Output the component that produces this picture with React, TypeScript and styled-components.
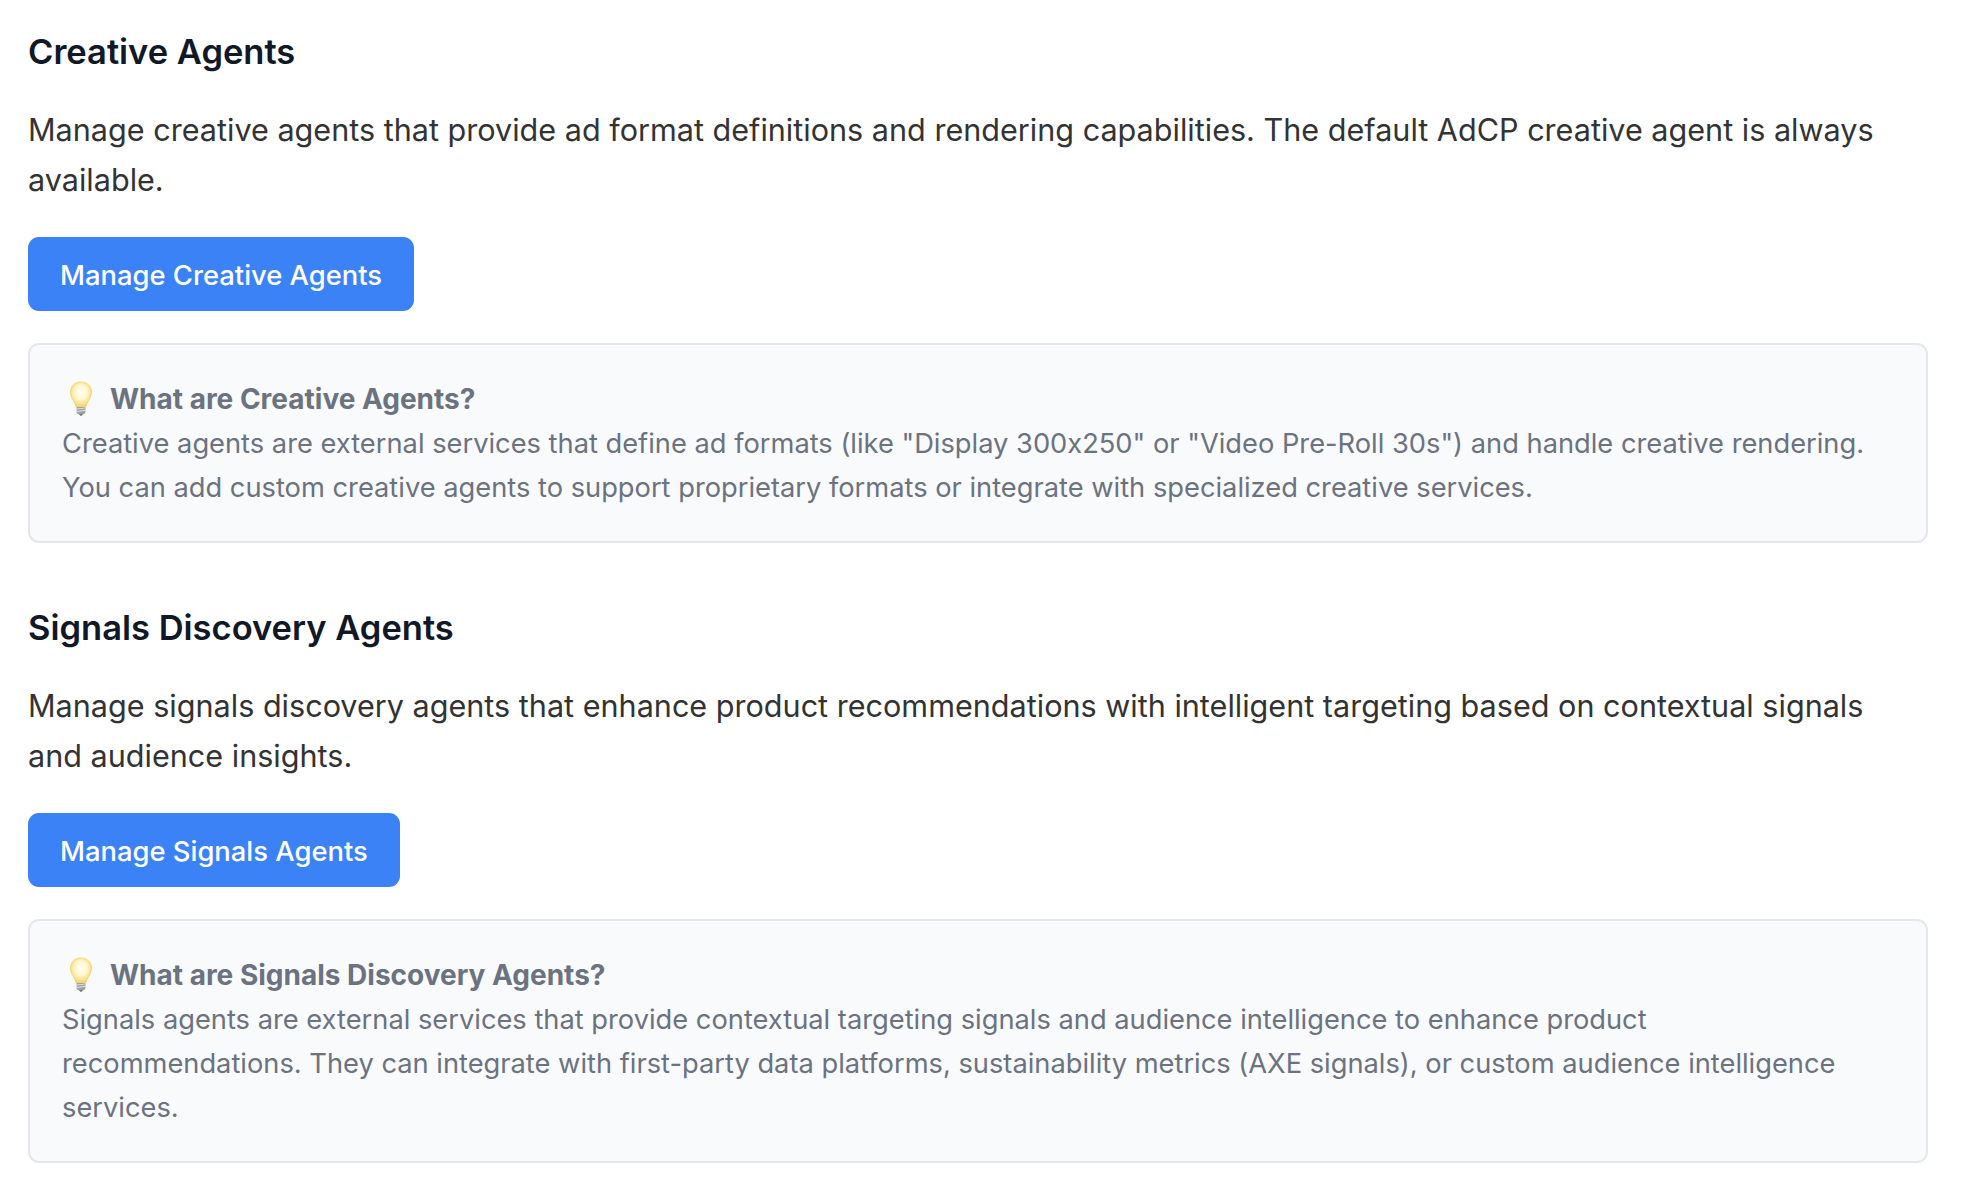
import React from "react";
import styled, { createGlobalStyle } from "styled-components";

const Global = createGlobalStyle`
  html, body { margin: 0; padding: 0; background: #fff; }
  body {
    font-family: Inter, "Liberation Sans", sans-serif;
    font-feature-settings: "calt" 0;
  }
`;

const Page = styled.main`
  width: 1900px;
  padding: 28px 48px 30px 28px;
`;

const Section = styled.section`
  margin-bottom: 61px;
  &:last-child { margin-bottom: 0; }
`;

const Heading = styled.h2`
  margin: 0;
  font-size: 34.5px;
  line-height: 48px;
  font-weight: 600;
  color: #111827;
`;

const Lead = styled.p`
  margin: 29px 0 0;
  max-width: 1885px;
  font-size: 30.58px;
  line-height: 50px;
  font-weight: 400;
  color: #333;
`;

const Button = styled.button`
  display: block;
  margin-top: 32px;
  height: 74px;
  padding: 1px 32px 0;
  border: 0;
  border-radius: 11px;
  background: #3b82f6;
  color: #fff;
  font: 500 27.36px Inter, sans-serif;
  font-feature-settings: "calt" 0;
`;

const InfoBox = styled.div`
  margin-top: 32px;
  padding: 32px 32px 31px;
  box-sizing: border-box;
  border: 2px solid #e5e7eb;
  border-radius: 11px;
  background: #f9fafb;
  font-size: 27.28px;
  line-height: 44px;
  color: #6b7280;
`;

const InfoTitle = styled.div`
  display: flex;
  align-items: center;
  gap: 12px;
  font-size: 28px;
  font-weight: 700;
`;

const InfoBody = styled.div`
  margin-top: 1px;
  max-width: 1815px;
  font-weight: 400;
`;

const Bulb = () => (
  <svg width="36" height="36" viewBox="0 0 36 36" aria-hidden="true">
    <defs>
      <radialGradient id="glass" cx="50%" cy="42%" r="55%">
        <stop offset="0" stopColor="#fffef6" />
        <stop offset="0.55" stopColor="#fff6c9" />
        <stop offset="1" stopColor="#f6d56e" />
      </radialGradient>
    </defs>
    <path d="M19 1C12.600 1 8.400 5.800 8.400 11.400c0 5.600 4.600 9 5.800 14.600h9.600c1.200-5.600 5.800-9 5.800-14.600C29.600 5.800 25.400 1 19 1z" fill="url(#glass)" stroke="#f3cf6b" strokeWidth="0.8" />
    <path d="M14.600 26h8.800v5.200c0 1.400-2 2-2.600 2.200-.5 1.400-3.100 1.400-3.600 0-.6-.2-2.600-.8-2.600-2.200z" fill="#a1a1a1" />
    <path d="M14.800 28l8.400-1M14.800 30.400l8.400-1" stroke="#e8e8e8" strokeWidth="0.9" />
    <path d="M17.400 33.500c.5 1.200 2.700 1.200 3.200 0z" fill="#4b4b4b" />
  </svg>
);

const sections = [
  {
    title: "Creative Agents",
    lead: "Manage creative agents that provide ad format definitions and rendering capabilities. The default AdCP creative agent is always available.",
    button: "Manage Creative Agents",
    info: "What are Creative Agents?",
    body: 'Creative agents are external services that define ad formats (like "Display 300x250" or "Video Pre-Roll 30s") and handle creative rendering. You can add custom creative agents to support proprietary formats or integrate with specialized creative services.',
  },
  {
    title: "Signals Discovery Agents",
    lead: "Manage signals discovery agents that enhance product recommendations with intelligent targeting based on contextual signals and audience insights.",
    button: "Manage Signals Agents",
    info: "What are Signals Discovery Agents?",
    body: "Signals agents are external services that provide contextual targeting signals and audience intelligence to enhance product recommendations. They can integrate with first-party data platforms, sustainability metrics (AXE signals), or custom audience intelligence services.",
  },
];

export default function App() {
  return (
    <Page>
      <Global />
      {sections.map((s) => (
        <Section key={s.title}>
          <Heading>{s.title}</Heading>
          <Lead>{s.lead}</Lead>
          <Button>{s.button}</Button>
          <InfoBox>
            <InfoTitle><Bulb />{s.info}</InfoTitle>
            <InfoBody>{s.body}</InfoBody>
          </InfoBox>
        </Section>
      ))}
    </Page>
  );
}
